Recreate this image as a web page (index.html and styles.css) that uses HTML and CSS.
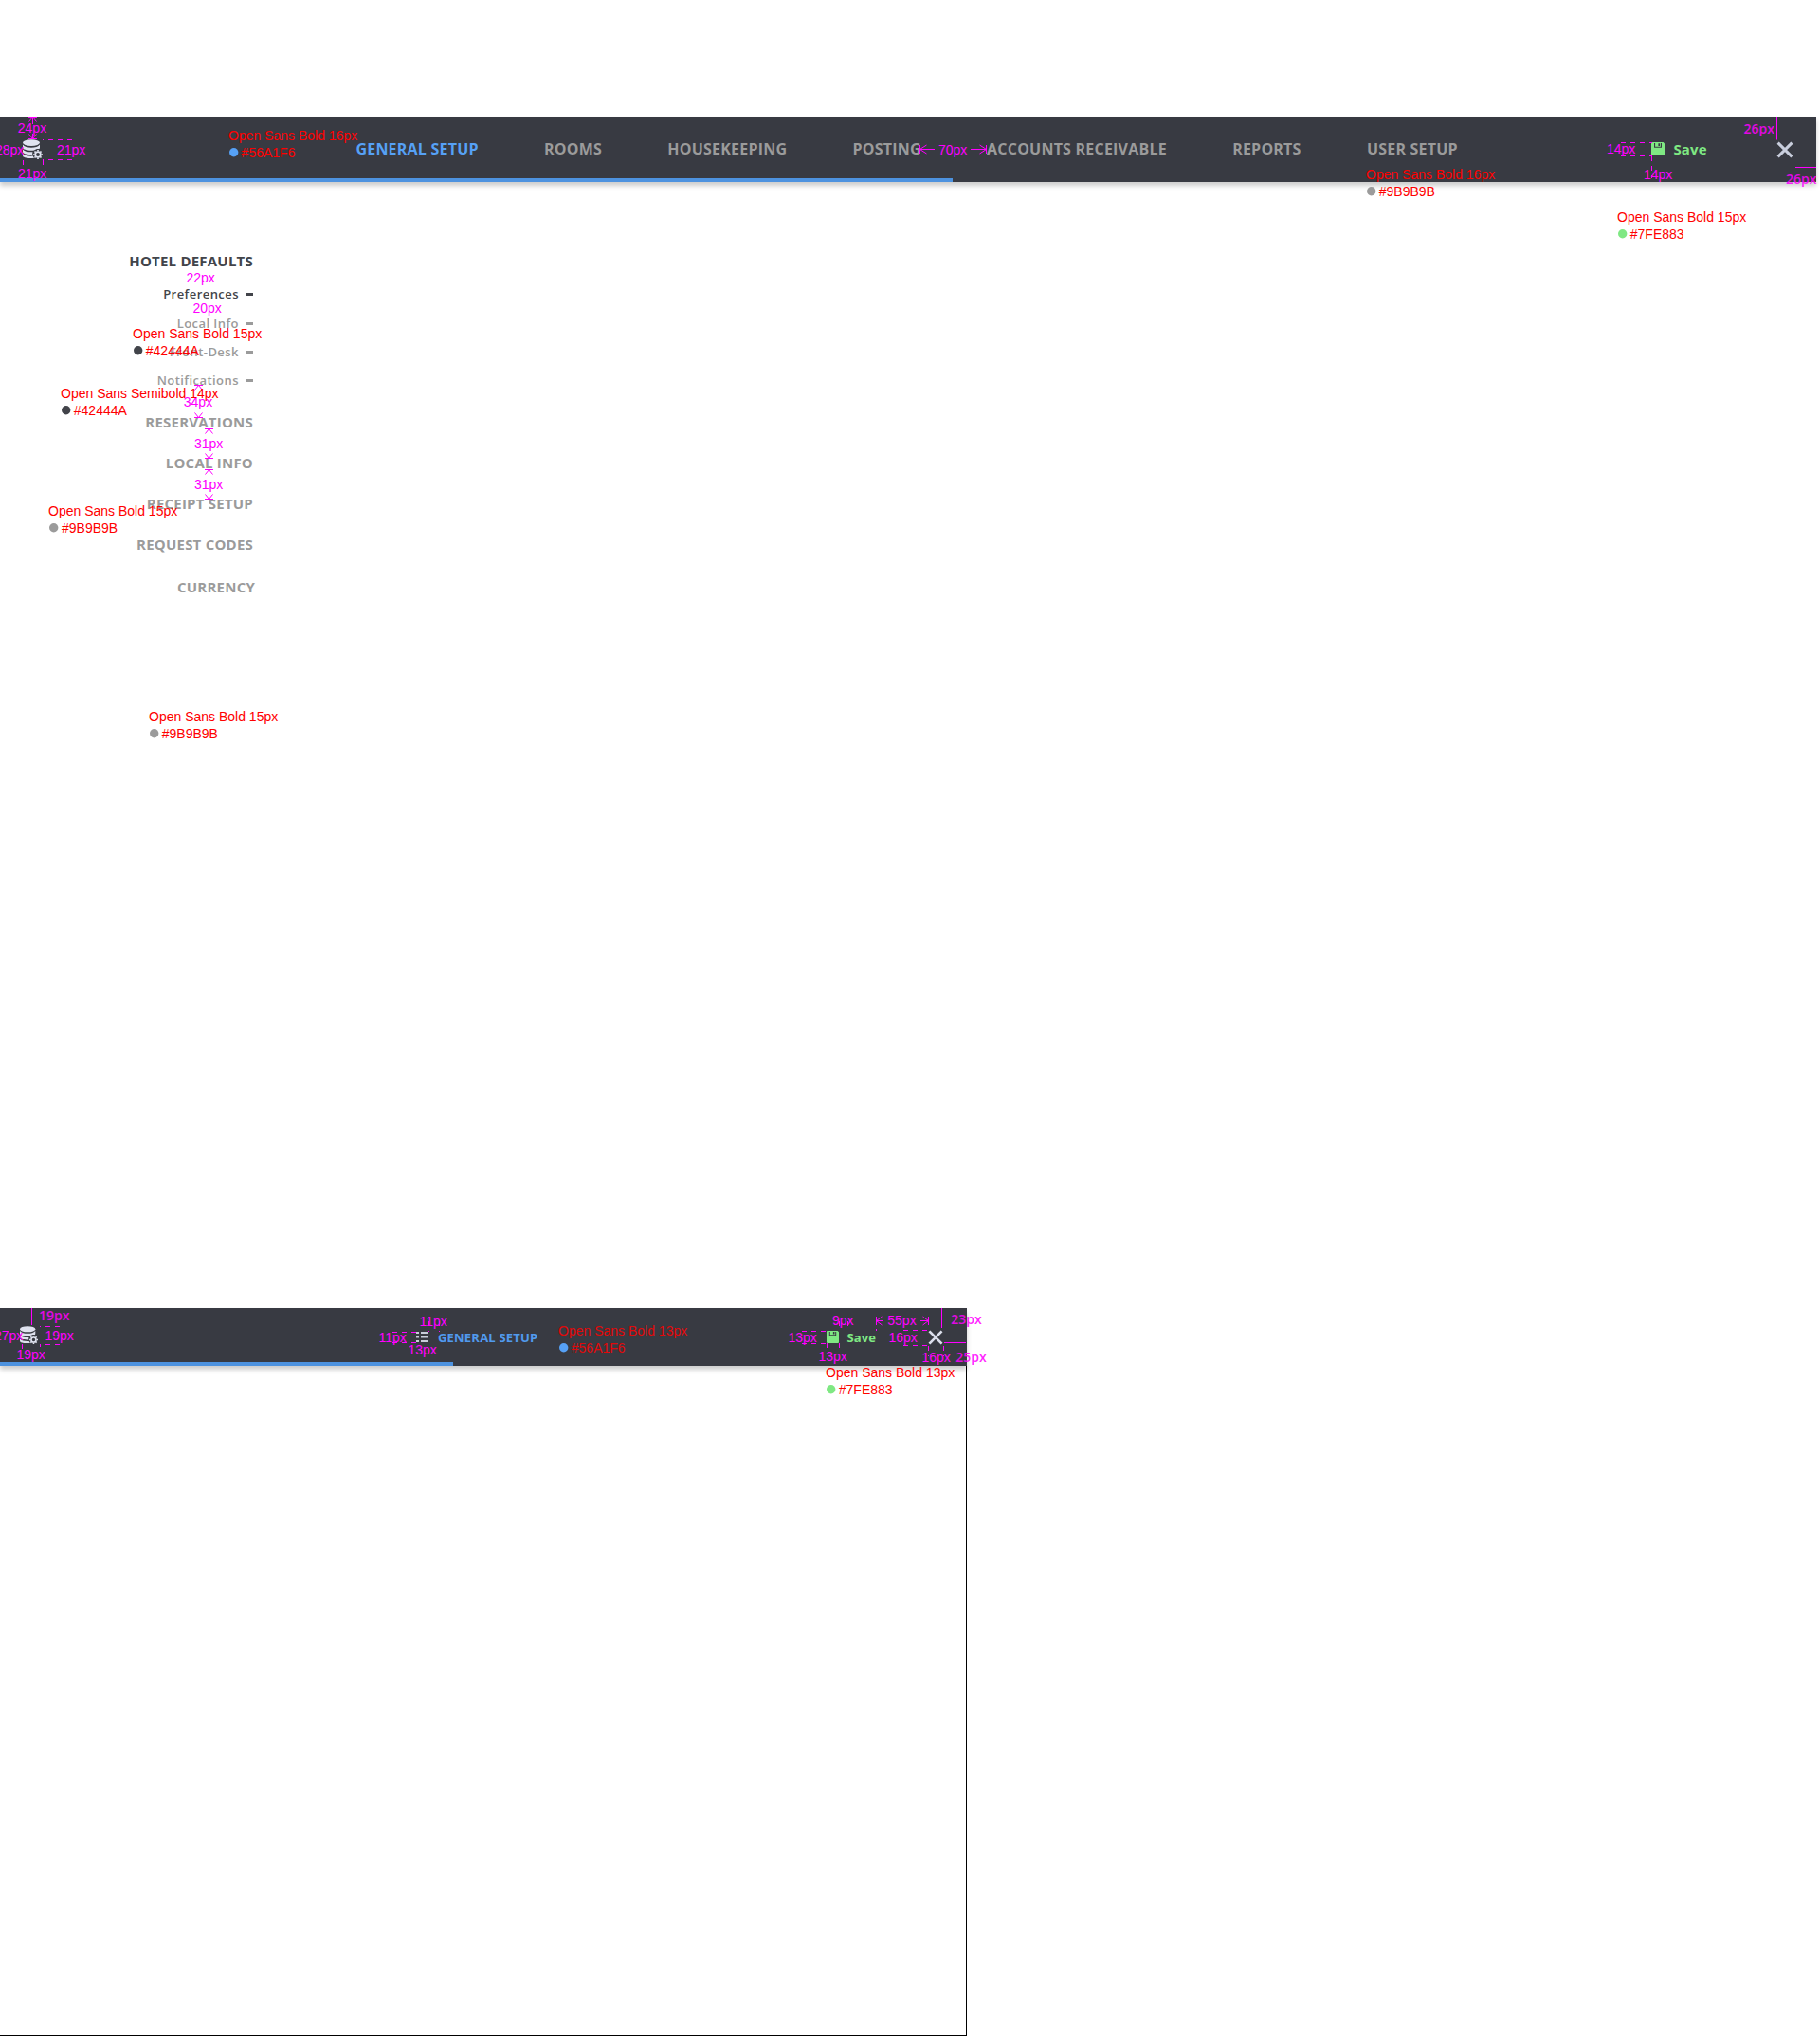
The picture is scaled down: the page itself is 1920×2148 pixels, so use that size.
FILE: index.html
```html
<!DOCTYPE html>
<html lang="en">
<head>
<meta charset="utf-8">
<title>Hotel setup – navigation spec</title>
<link rel="stylesheet" href="styles.css">
</head>
<body>
<svg class="defs" width="0" height="0">
  <defs>
    <symbol id="i-db" viewBox="0 0 21 21">
      <ellipse cx="9" cy="3.6" rx="9" ry="3.4"/>
      <path d="M0 5.6C1.6 8 5 8.7 9 8.7s7.400-.7 9-3.100v3.200c0 .5-.2.9-.6 1.300-1.900-.5-4 .1-5.400 1.500-1 .2-2 .2-3 .2-5 0-9-1.200-9-3.200z"/>
      <path d="M0 10.400c1.600 2.200 5.500 3.100 10.500 2.900-.3.800-.4 1.700-.3 2.600-5.600.3-10.200-.8-10.200-2.900z"/>
      <path d="M0 14.900c1.600 2.200 5.900 3 10.700 2.700.3.900.8 1.600 1.400 2.200C5.400 20.500 0 19.400 0 17.300z"/>
      <circle cx="16" cy="16" r="2.800" class="gear-ring"/>
      <path class="gear-teeth" d="M16 12.600V11M16 21v-1.600M12.600 16H11M21 16h-1.600M13.600 13.600l-1.100-1.100M19.500 19.500l-1.100-1.100M18.400 13.600l1.100-1.100M12.500 19.500l1.100-1.100"/>
    </symbol>
    <symbol id="i-save" viewBox="0 0 14 14">
      <path fill-rule="evenodd" d="M1 0h11.600L14 1.400V13a1 1 0 0 1-1 1H1a1 1 0 0 1-1-1V1a1 1 0 0 1 1-1zM3 1v4.700h8V1zM4.100 1v3.700h5.800V1zM7.400 1.200v2.700h1.700V1.200z"/>
    </symbol>
    <symbol id="i-close" viewBox="0 0 18 18">
      <path d="M1.600 1.600l14.800 14.800M16.400 1.600L1.600 16.400"/>
    </symbol>
    <symbol id="i-list" viewBox="0 0 13 11">
      <path d="M0 0h3v2H0zM5 0h8v2H5zM0 4.500h3v2H0zM5 4.500h7v2H5zM0 9h3v2H0zM5 9h8v2H5z"/>
    </symbol>
    <symbol id="m-up" viewBox="0 0 10 8" overflow="visible">
      <path d="M.5.5h9M5 .5L1 5.500M5 .5l4 5"/>
    </symbol>
    <symbol id="m-down" viewBox="0 0 10 8" overflow="visible">
      <path d="M.5 7.500h9M5 7.500l-4-5M5 7.500l4-5"/>
    </symbol>
  </defs>
</svg>

<header class="bar bar-wide">
  <svg class="brand"><use href="#i-db"/></svg>
  <nav class="nav">
    <a class="active">GENERAL SETUP</a><a>ROOMS</a><a>HOUSEKEEPING</a><a>POSTING</a><a>ACCOUNTS RECEIVABLE</a><a>REPORTS</a><a>USER SETUP</a>
  </nav>
  <a class="save"><svg><use href="#i-save"/></svg>Save</a>
  <svg class="close"><use href="#i-close"/></svg>
  <div class="progress"></div>
</header>

<main class="content">
  <aside class="side">
    <h2 class="current">HOTEL DEFAULTS</h2>
    <ul>
      <li class="current">Preferences</li>
      <li>Local Info</li>
      <li>Front-Desk</li>
      <li>Notifications</li>
    </ul>
    <h2>RESERVATIONS</h2>
    <h2>LOCAL INFO</h2>
    <h2>RECEIPT SETUP</h2>
    <h2>REQUEST CODES</h2>
    <h2 class="last">CURRENCY</h2>
  </aside>
</main>

<section class="tablet">
  <header class="bar bar-tablet">
    <svg class="brand"><use href="#i-db"/></svg>
    <a class="section"><svg><use href="#i-list"/></svg>GENERAL SETUP</a>
    <a class="save"><svg><use href="#i-save"/></svg>Save</a>
    <svg class="close"><use href="#i-close"/></svg>
    <div class="progress"></div>
  </header>
  <div class="canvas"></div>
</section>

<svg class="spec" width="1920" height="2148" viewBox="0 0 1920 2148">
  <g class="dim-lines">
    <use href="#m-up" x="29.500" y="123" width="10" height="8"/>
    <use href="#m-down" x="29.500" y="139" width="10" height="8"/>
    <path d="M34.500 123v8M34.500 141v6"/>
    <path class="dash" d="M76 147.500H45M76 168.500H45M24.500 169v5M45.500 169v5"/>
    <path d="M970.500 153v9M970.500 157.500H986M970.500 157.500l7-4.500M970.500 157.500l7 4.500M1040.500 153v9M1024 157.500h16.500M1040.500 157.500l-7-4.500M1040.500 157.500l-7 4.500"/>
    <path class="dash" d="M1710 150.500h33M1710 164.500h33M1742.500 165v23M1756.500 165v23"/>
    <path d="M1874.500 123v24.500M1894 176.500h22"/>
    <use href="#m-up" x="204.500" y="406" width="10" height="8"/>
    <use href="#m-down" x="204.500" y="433" width="10" height="8"/>
    <use href="#m-up" x="215.500" y="452" width="10" height="8"/>
    <use href="#m-down" x="215.500" y="476" width="10" height="8"/>
    <use href="#m-up" x="215.500" y="495" width="10" height="8"/>
    <use href="#m-down" x="215.500" y="519" width="10" height="8"/>
    <path d="M33.500 1380v18"/>
    <path class="dash" d="M63 1399.500H42M63 1418.500H42M23.500 1418v5M42.500 1418v3"/>
    <path class="dash" d="M414 1405.500h25M414 1416.500h25M452.500 1394v11M463.500 1394v11"/>
    <path class="dash" d="M846 1404.500h26M846 1417.500h26M885.500 1394v10M894.500 1394v10M924.500 1402v2M872.500 1417v8M885.500 1417v8"/>
    <path d="M924.500 1389v9M924.500 1393.500h7M924.500 1393.500l6-4.500M924.500 1393.500l6 4.500M979.500 1389v9M971 1393.500h8.500M979.500 1393.500l-6-4.500M979.500 1393.500l-6 4.500"/>
    <path class="dash" d="M953 1403.500h26M953 1419.500h26M979.500 1420v11M995.500 1420v11"/>
    <path d="M993.500 1380v21M996 1416.500h23"/>
  </g>
  <g class="dim">
    <text x="18.800" y="140">24px</text>
    <text x="-5" y="163">28px</text>
    <text x="60" y="163">21px</text>
    <text x="19" y="188">21px</text>
    <text x="990" y="163">70px</text>
    <text x="1695" y="162">14px</text>
    <text x="1734" y="189">14px</text>
    <text x="196.500" y="298">22px</text>
    <text x="203.500" y="330">20px</text>
    <text x="193.800" y="429">34px</text>
    <text x="205" y="473">31px</text>
    <text x="205" y="516">31px</text>
    <text x="-6" y="1414">27px</text>
    <text x="47.500" y="1414">19px</text>
    <text x="17.500" y="1434">19px</text>
    <text x="442.500" y="1399">11px</text>
    <text x="399.500" y="1416">11px</text>
    <text x="430.500" y="1429">13px</text>
    <text x="878" y="1398">9px</text>
    <text x="936.300" y="1398">55px</text>
    <text x="831.500" y="1416">13px</text>
    <text x="937.500" y="1416">16px</text>
    <text x="863.500" y="1436">13px</text>
    <text x="972.500" y="1437">16px</text>
  </g>
  <g class="dim dim-alt">
    <text x="1839.500" y="141">26px</text>
    <text x="1884" y="194">26px</text>
    <text x="41" y="1393">19px</text>
    <text x="1003.300" y="1397">23px</text>
    <text x="1008.300" y="1437">25px</text>
  </g>
  <g class="note">
    <text x="241" y="148">Open Sans Bold 16px</text><text x="254.600" y="166">#56A1F6</text><circle class="blue" cx="246.700" cy="160.700" r="4.700"/>
    <text x="1441" y="189">Open Sans Bold 16px</text><text x="1454.800" y="207">#9B9B9B</text><circle class="grey" cx="1446.700" cy="201.700" r="4.700"/>
    <text x="1706" y="234">Open Sans Bold 15px</text><text x="1719.800" y="252">#7FE883</text><circle class="green" cx="1711.700" cy="246.700" r="4.700"/>
    <text x="140" y="357">Open Sans Bold 15px</text><text x="153.800" y="375">#42444A</text><circle class="ink" cx="145.700" cy="369.700" r="4.700"/>
    <text x="64" y="420">Open Sans Semibold 14px</text><text x="77.800" y="438">#42444A</text><circle class="ink" cx="69.700" cy="432.700" r="4.700"/>
    <text x="51" y="544">Open Sans Bold 15px</text><text x="65" y="562">#9B9B9B</text><circle class="grey" cx="56.700" cy="556.700" r="4.700"/>
    <text x="157" y="761">Open Sans Bold 15px</text><text x="170.800" y="779">#9B9B9B</text><circle class="grey" cx="162.700" cy="773.700" r="4.700"/>
    <text class="dim-red" x="589" y="1409">Open Sans Bold 13px</text><text class="dim-red" x="602.800" y="1427">#56A1F6</text><circle class="blue" cx="594.700" cy="1421.700" r="4.700"/>
    <text x="871" y="1453">Open Sans Bold 13px</text><text x="884.800" y="1471">#7FE883</text><circle class="green" cx="876.700" cy="1465.700" r="4.700"/>
  </g>
</svg>
</body>
</html>
```

FILE: styles.css
```css
* { box-sizing: border-box; }

body {
  margin: 0;
  padding-top: 123px;
  width: 1920px;
  height: 2148px;
  position: relative;
  overflow: hidden;
  background: #fff;
  font-family: "Open Sans", sans-serif;
}

svg { display: block; flex: none; overflow: visible; }
.defs { position: absolute; }

/* Top bars */
.bar {
  position: relative;
  display: flex;
  align-items: center;
  background: #383a42;
  box-shadow: 0 4px 5px rgba(0, 0, 0, .2);
  font-weight: 700;
  white-space: nowrap;
}
.bar-wide { width: 1916px; height: 69px; padding: 0 24px 1px; font-size: 16px; }
.bar-tablet { width: 1020px; height: 61px; padding: 0 25px 0 21px; font-size: 13px; letter-spacing: .2px; }

.progress { position: absolute; left: 0; bottom: 0; height: 4px; background: #4d92df; }
.bar-wide .progress { width: 1005px; }
.bar-tablet .progress { width: 478px; }

.brand { fill: #dfe2ef; }
.bar-wide .brand { width: 21px; height: 21px; margin-top: 1px; }
.bar-tablet .brand { width: 19px; height: 19px; margin-top: -4px; }
.gear-ring { fill: none; stroke: #dfe2ef; stroke-width: 1.8; }
.gear-teeth { fill: none; stroke: #dfe2ef; stroke-width: 1.7; }

.nav { display: flex; gap: 69.25px; margin-left: 330.4px; color: #9b9b9b; letter-spacing: .22px; }
.nav .active { color: #56a1f6; }

.section { display: flex; align-items: center; gap: 10px; margin-left: 399px; color: #519aee; }
.section svg { width: 13px; height: 11px; fill: #c9cdda; }

.save { display: flex; align-items: center; margin-left: auto; color: #7fe883; }
.save svg { fill: #7fe883; }
.bar-wide .save { gap: 9.500px; width: 132px; font-size: 15px; letter-spacing: .1px; }
.bar-wide .save svg { width: 14px; height: 14px; }
.bar-tablet .save { gap: 8.500px; width: 107px; letter-spacing: .1px; }
.bar-tablet .save svg { width: 13px; height: 13px; }

.close { fill: none; stroke: #c9cedd; stroke-width: 3; }
.bar-wide .close { width: 18px; height: 18px; margin-top: 1px; }
.bar-tablet .close { width: 16px; height: 16px; stroke: #dcdfec; }

/* Side menu */
.content { height: 1188px; padding-top: 68px; }
.side { width: 267px; text-align: right; color: #9b9b9b; }
.side h2 { margin: 0; height: 43px; line-height: 30px; font-size: 15px; font-weight: 700; letter-spacing: .22px; }
.side h2:first-child { height: 35px; }
.side ul { margin: 0; padding: 0; height: 135px; list-style: none; font-size: 13px; font-weight: 600; letter-spacing: .45px; }
.side li { display: flex; justify-content: flex-end; align-items: center; gap: 8px; height: 30px; }
.side li.current { margin-bottom: 1px; }
.side li::after { content: ""; width: 7px; height: 3px; background: currentColor; }
.side .current { color: #42444a; }
.side .last { position: relative; top: 2px; left: 2px; }

/* Tablet board */
.tablet { width: 1020px; height: 768px; }
.canvas { height: 707px; border: solid #000; border-width: 0 1px 1px 0; }

/* Measurements and type notes drawn over both boards */
.spec { position: absolute; left: 0; top: 0; font: 14px "Liberation Sans", sans-serif; overflow: hidden; }
.dim { fill: #f0f; }
.dim-alt { font-family: "Open Sans", sans-serif; font-weight: 600; opacity: .85; }
.dim-lines { fill: none; stroke: #f0f; stroke-width: 1; }
.dash { stroke-dasharray: 5 5; }
.note { fill: #f00; }
.dim-red { opacity: .86; }
.blue { fill: #56a1f6; }
.grey { fill: #9b9b9b; }
.green { fill: #7fe883; }
.ink { fill: #42444a; }
```
